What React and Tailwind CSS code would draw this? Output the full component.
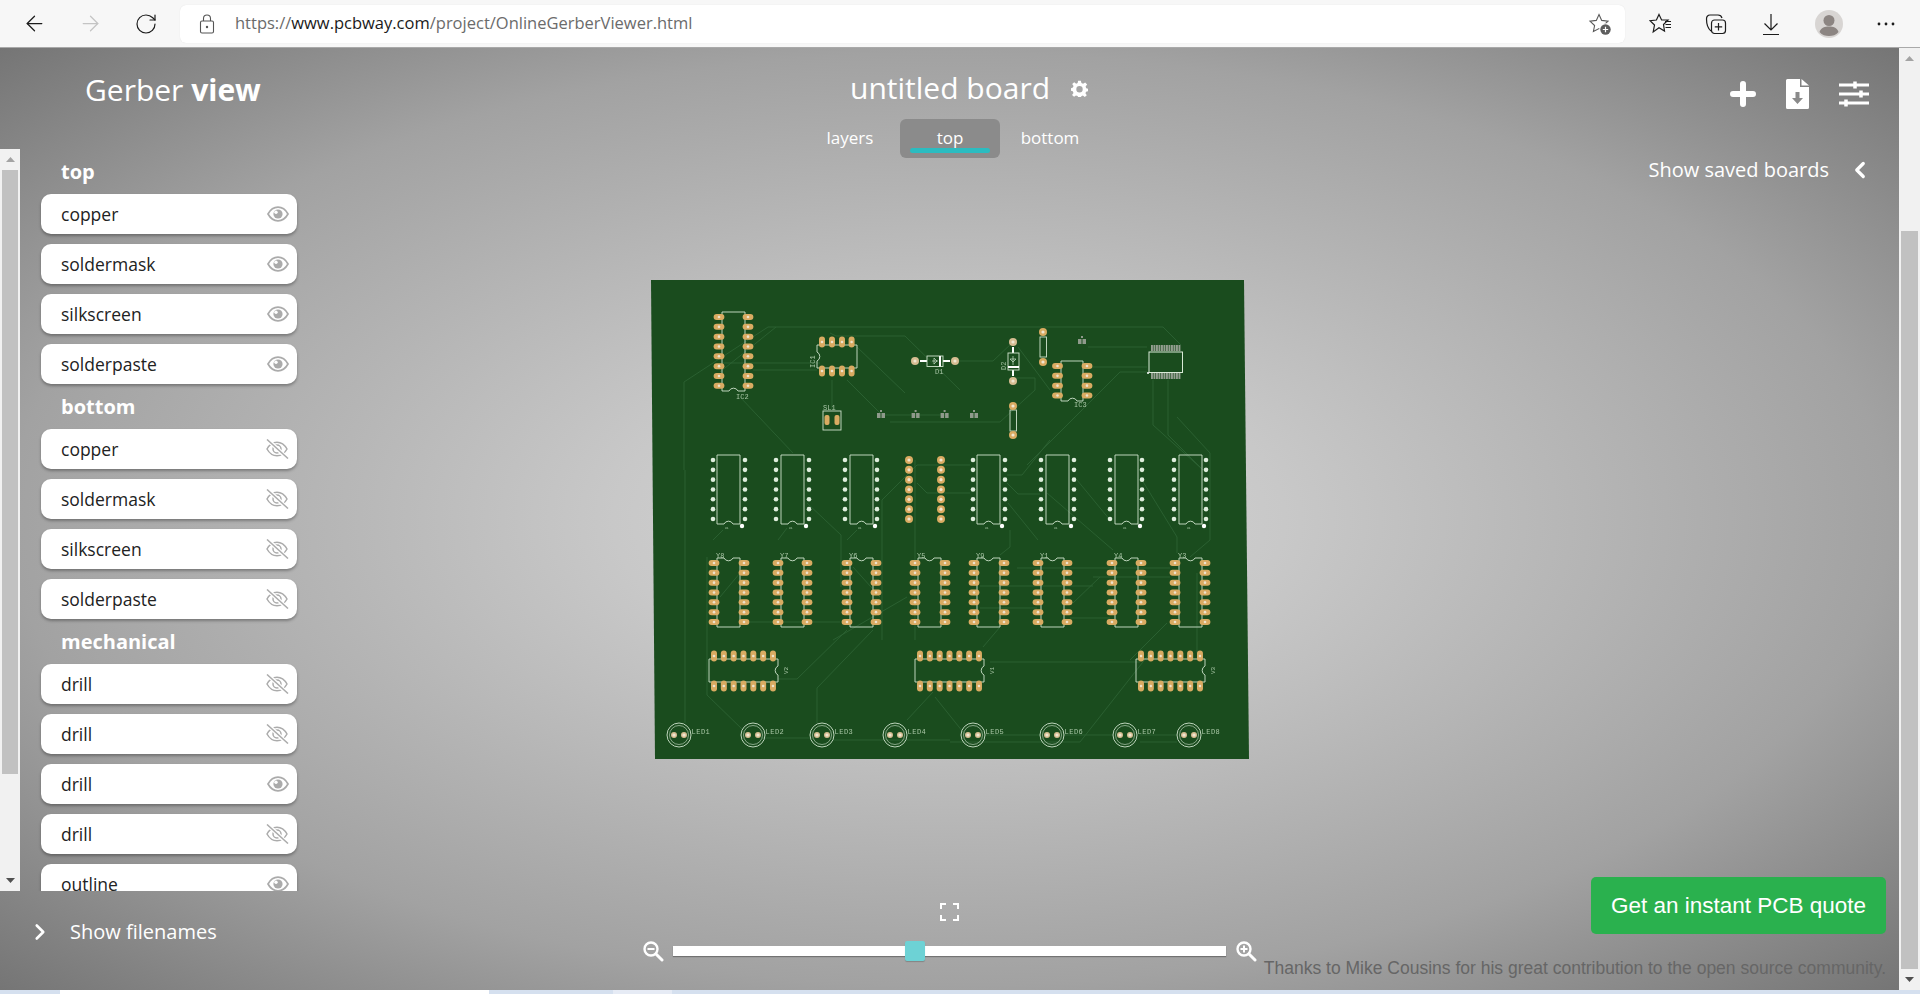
import { ArrowLeft, ArrowRight, RotateCw, ChevronLeft, ChevronRight } from 'lucide-react';

const layerGroups = [
    {
        title: 'top',
        rows: [['copper', true], ['soldermask', true], ['silkscreen', true], ['solderpaste', true]]
    },
    {
        title: 'bottom',
        rows: [['copper', false], ['soldermask', false], ['silkscreen', false], ['solderpaste', false]]
    },
    {
        title: 'mechanical',
        rows: [['drill', false], ['drill', false], ['drill', true], ['drill', false], ['outline', true]]
    }
];

const traces = [
    'M684 470V382L768 327H1163L1181 345',
    'M776 327L720 372',
    'M830 333L836 336H905L960 390',
    'M857 347L905 393',
    'M723 363H820',
    'M753 370H817',
    'M832 380V410',
    'M847 380L880 413',
    'M883 415L947 415',
    'M890 422H1000L1035 390V378H1013',
    'M740 397L793 453',
    'M950 361H993L1013 342',
    'M1018 347L1050 390',
    'M1088 347H1147',
    'M1083 367H1147',
    'M1147 372H1120L1027 465',
    'M1153 380V425L1203 470',
    'M1168 380V435L1203 470',
    'M1177 417L1210 453V540L1190 557',
    'M685 470V723',
    'M713 540L723 530',
    'M707 557V695L743 730',
    'M807 503L841 535V587',
    'M778 540L787 528',
    'M847 540L857 530',
    'M882 640V500L917 465H970',
    'M915 460V640',
    'M917 483L927 493H970',
    'M853 567L880 597',
    'M720 597L740 573',
    'M750 622H840',
    'M833 640L907 597',
    'M847 630L797 679H778',
    'M873 630L817 688V723',
    'M762 738H810',
    'M833 740H950',
    'M907 720L933 692',
    'M935 697L967 737',
    'M1007 475H1022L1050 440',
    'M1007 483L1018 494H1040',
    'M1010 530V547L1000 555',
    'M1038 540L1008 503',
    'M1047 493L1113 550',
    'M1077 480L1110 520',
    'M1142 480L1177 537V553',
    'M1017 568H1170',
    'M1093 577H1170',
    'M1073 603L1100 577',
    'M980 586H1093',
    'M980 608H1037',
    'M1070 618H1110',
    'M990 662H1140',
    'M1197 573V653',
    'M1150 653L1080 742H950',
    'M1167 623L1130 660',
    'M1000 627L983 647',
    'M985 735H1040',
    'M1063 735H1113',
    'M1140 735H1177',
    'M1140 742H1177'
];

const dipRowOne = [
    [717, 713, 745], [781, 776, 809], [850, 845, 877], [977, 973, 1005],
    [1046, 1041, 1074], [1115, 1110, 1142], [1179, 1174, 1206]
];
const dipRowTwo = [
    [717, 714, 744, 'Y8'], [781, 778, 807, 'Y7'], [850, 847, 876, 'Y6'], [918, 915, 945, 'Y5'],
    [977, 974, 1004, 'Y9'], [1041, 1038, 1067, 'Y1'], [1115, 1112, 1141, 'Y4'], [1179, 1175, 1205, 'Y3']
];
const leds = [679, 753, 822, 895, 973, 1052, 1125, 1189];
const steps = (start, count) => Array.from({ length: count }, (_, i) => start + i * 9.83);

function Pad({ x, y, vertical }) {
    return (
        <g>
            <rect
                x={vertical ? x - 3 : x - 5.4}
                y={vertical ? y - 5.4 : y - 3}
                width={vertical ? 6 : 10.8}
                height={vertical ? 10.8 : 6}
                rx="3"
                fill="#d9ab62"
            />
            <circle cx={x} cy={y} r="1.3" fill="#eee2cc" />
        </g>
    );
}

function RoundPad({ x, y, r = 4, fill = '#d9ab62' }) {
    return (
        <g>
            <circle cx={x} cy={y} r={r} fill={fill} />
            <circle cx={x} cy={y} r="1.6" fill="#f0e6d2" />
        </g>
    );
}

function PcbBoard() {
    const silk = { fill: 'none', stroke: '#cfe3cd', strokeWidth: 0.9 };
    const label = { fill: '#a9c6a6', fontFamily: 'Liberation Mono, monospace' };
    return (
        <svg viewBox="640 270 620 500" className="block w-[620px] h-[500px] blur-[0.35px]">
            <polygon points="651,280 1244,280 1249,759 655,759" fill="#1a4c1e" />
            <g fill="none" stroke="#2d6233" strokeWidth="0.9">
                {traces.map((d) => <path key={d} d={d} />)}
            </g>

            {/* IC2 */}
            <path d="M722 312H745V391H738A5 5 0 0 0 729 391H722Z" {...silk} />
            {[719, 748].map((x) => steps(317, 8).map((y) => <Pad key={`${x}-${y}`} x={x} y={y} />))}
            <text x="736" y="399" fontSize="7" {...label}>IC2</text>

            {/* IC1 */}
            <path d="M817 345H857V368H817V361A5 5 0 0 0 817 352Z" {...silk} />
            {[342, 371].map((y) => [822, 832, 842, 851.6].map((x) => <Pad key={`${x}-${y}`} x={x} y={y} vertical />))}
            <text x="815" y="368" fontSize="7" transform="rotate(-90 815 368)" {...label}>IC1</text>

            {/* D1 */}
            <path d="M920 361H927M943 361H950" stroke="#ffffff" strokeWidth="2" />
            <rect x="927" y="356" width="16" height="10.5" {...silk} />
            <path d="M940 356V366.5" stroke="#ffffff" strokeWidth="2" />
            <path d="M932 361H938M934 358V364L937 361Z" {...silk} strokeWidth="0.7" />
            <RoundPad x={915} y={361} fill="#d6bd92" />
            <RoundPad x={955} y={361} fill="#d6bd92" />
            <text x="935" y="374" fontSize="7" {...label}>D1</text>

            {/* SL1 */}
            <rect x="823" y="411" width="18" height="19" {...silk} />
            <rect x="824.5" y="415" width="5" height="10" rx="2" fill="#d9ab62" />
            <rect x="834.5" y="415" width="5" height="10" rx="2" fill="#d9ab62" />
            <text x="823" y="410" fontSize="7" {...label}>SL1</text>

            {/* small parts */}
            {[[881, 415], [915.6, 415], [944.6, 415], [974, 415], [1082, 341]].map(([x, y]) => (
                <g key={x} fill="#8f9a8c">
                    <rect x={x - 4} y={y - 2} width="3.5" height="5" />
                    <rect x={x + 0.5} y={y - 2} width="3.5" height="5" />
                    <rect x={x - 1} y={y - 5} width="2" height="2" />
                </g>
            ))}

            {/* D2 */}
            <path d="M1013 347V353M1013 370V376" stroke="#ffffff" strokeWidth="2" />
            <rect x="1008" y="353" width="11" height="17" {...silk} />
            <path d="M1008 367H1019" stroke="#ffffff" strokeWidth="2" />
            <path d="M1013 356V365M1010 359H1016L1013 362Z" {...silk} strokeWidth="0.7" />
            <RoundPad x={1013} y={342} fill="#d6bd92" />
            <RoundPad x={1013} y={381} fill="#d6bd92" />
            <text x="1006" y="370" fontSize="7" transform="rotate(-90 1006 370)" {...label}>D2</text>

            {/* resistors */}
            <rect x="1040" y="337" width="6.5" height="20" {...silk} />
            <RoundPad x={1043} y={332} />
            <RoundPad x={1043} y={362} />
            <rect x="1010" y="410" width="6.5" height="21" {...silk} />
            <RoundPad x={1013} y={406} />
            <RoundPad x={1013} y={435} />

            {/* IC3 */}
            <path d="M1061 361H1083V401H1077A5 5 0 0 0 1068 401H1061Z" {...silk} />
            {[1057.5, 1087].map((x) => steps(366, 4).map((y) => <Pad key={`${x}-${y}`} x={x} y={y} />))}
            <text x="1074" y="407" fontSize="7" {...label}>IC3</text>

            {/* SOIC */}
            <rect x="1149" y="352" width="33.5" height="20.5" fill="none" stroke="#d9ead7" strokeWidth="1" />
            {[345, 373].map((y) => Array.from({ length: 12 }, (_, i) => (
                <rect key={`${y}-${i}`} x={1151 + i * 2.5} y={y} width="1.9" height="6" fill="#949e90" />
            )))}
            <circle cx="1148" cy="373" r="1" fill="#ffffff" />

            {/* DIP row, no pads */}
            {dipRowOne.map(([x, left, right]) => (
                <g key={x}>
                    <path d={`M${x} 455H${x + 23}V524H${x + 16}A5 5 0 0 0 ${x + 7} 524H${x}Z`} {...silk} />
                    {[left, right].map((px) => steps(460, 7).map((y) => (
                        <circle key={`${px}-${y}`} cx={px} cy={y} r="2.3" fill="#dfeedd" />
                    )))}
                    <circle cx={x + 25} cy="526" r="2.2" fill="#ffffff" />
                    <text x={x + 8} y="529" fontSize="3" {...label}>U1</text>
                </g>
            ))}
            {[909, 941].map((x) => steps(460, 7).map((y) => <RoundPad key={`${x}-${y}`} x={x} y={y} />))}

            {/* DIP row with pads */}
            {dipRowTwo.map(([x, left, right, name]) => (
                <g key={x}>
                    <path d={`M${x} 558H${x + 7}A5 5 0 0 0 ${x + 16} 558H${x + 23}V627H${x}Z`} {...silk} />
                    {[left, right].map((px) => steps(563, 7).map((y) => <Pad key={`${px}-${y}`} x={px} y={y} />))}
                    <text x={x - 1} y="558" fontSize="7" {...label}>{name}</text>
                </g>
            ))}

            {/* horizontal packages */}
            {[[709, 714, 'V2'], [915, 920, 'V1'], [1136, 1141, 'V3']].map(([x, padX, name]) => (
                <g key={x}>
                    <path d={`M${x} 659H${x + 69}V666A5 5 0 0 0 ${x + 69} 675V682H${x}Z`} {...silk} />
                    {[656, 686].map((y) => steps(padX, 7).map((px) => <Pad key={`${px}-${y}`} x={px} y={y} vertical />))}
                    <text x={x + 72} y="673" fontSize="6" transform={`rotate(-90 ${x + 76} 670)`} {...label}>{name}</text>
                </g>
            ))}

            {/* LEDs */}
            {leds.map((x, i) => (
                <g key={x}>
                    <circle cx={x} cy="735" r="12" {...silk} />
                    <circle cx={x} cy="735" r="9.5" {...silk} strokeWidth="0.6" />
                    <RoundPad x={x - 5} y={735} r={3} fill="#d6bd92" />
                    <RoundPad x={x + 5} y={735} r={3} fill="#d6bd92" />
                    <text x={x + 12.5} y="733.5" fontSize="7" letterSpacing="0.5" {...label}>{`LED${i + 1}`}</text>
                </g>
            ))}
        </svg>
    );
}

function EyeIcon({ on }) {
    if (on) {
        return (
            <svg width="22" height="16" viewBox="0 0 22 16" className="shrink-0">
                <path d="M1 8C3.5 3.5 7 1.2 11 1.2S18.5 3.5 21 8C18.5 12.5 15 14.8 11 14.8S3.5 12.5 1 8Z" fill="none" stroke="#ababab" strokeWidth="1.7" />
                <circle cx="11" cy="8" r="4.6" fill="#ababab" />
                <circle cx="9" cy="6.3" r="1.7" fill="#ffffff" />
            </svg>
        );
    }
    return (
        <svg width="24" height="20" viewBox="0 0 24 20" className="shrink-0">
            <path d="M2 10C4.5 5.5 8 3.2 12 3.2S19.5 5.5 22 10C19.5 14.5 16 16.8 12 16.8S4.5 14.500 2 10Z" fill="none" stroke="#ababab" strokeWidth="1.5" />
            <circle cx="12" cy="10" r="4" fill="none" stroke="#ababab" strokeWidth="1.5" />
            <path d="M2.5 0.5L22.5 19.5" stroke="#ffffff" strokeWidth="4" />
            <path d="M2 0.5L23 19.5" stroke="#ababab" strokeWidth="1.5" />
        </svg>
    );
}

function ZoomIcon({ plus }) {
    return (
        <svg width="22" height="22" viewBox="0 0 22 22" className="shrink-0">
            <circle cx="9" cy="9" r="6.5" fill="none" stroke="#ffffff" strokeWidth="2.4" />
            <path d="M14 14L20 20" stroke="#ffffff" strokeWidth="3" strokeLinecap="round" />
            <path d={plus ? 'M5.5 9H12.5M9 5.5V12.5' : 'M5.5 9H12.5'} stroke="#ffffff" strokeWidth="2" />
        </svg>
    );
}

function ScrollBar({ className, thumbClassName }) {
    return (
        <div className={`flex flex-col bg-[#f1f1f1] ${className}`}>
            <div className="h-[21px] flex items-center justify-center text-[0px]">
                <svg width="9" height="5" viewBox="0 0 9 5"><path d="M0 5L4.5 0L9 5Z" fill="#a3a3a3" /></svg>
            </div>
            <div className="flex-1 flex flex-col">
                <div className={`mx-[2px] bg-[#c1c1c1] ${thumbClassName}`} />
            </div>
            <div className="h-[21px] flex items-center justify-center text-[0px]">
                <svg width="9" height="5" viewBox="0 0 9 5"><path d="M0 0L4.5 5L9 0Z" fill="#505050" /></svg>
            </div>
        </div>
    );
}

function BrowserBar() {
    return (
        <div className="h-[48px] shrink-0 flex items-center bg-[#f7f7f7] border-b border-[#a9a9a9] font-['Open_Sans',sans-serif]">
            <div className="w-[180px] shrink-0 flex items-center pl-[22px] gap-[31px]">
                <ArrowLeft size={25} strokeWidth={1.2} className="text-[#1c1c1c]" />
                <ArrowRight size={25} strokeWidth={1.2} className="text-[#c4c4c4]" />
                <RotateCw size={24} strokeWidth={1.2} className="text-[#1c1c1c]" />
            </div>
            <div className="w-[1445px] h-[38px] flex items-center bg-white rounded-md pl-[19px] pr-[13px] shadow-[0_0_1px_rgba(0,0,0,0.12)]">
                <svg width="16" height="20" viewBox="0 0 16 20" className="shrink-0">
                    <rect x="1.5" y="7" width="13" height="12" rx="1.5" fill="none" stroke="#555" strokeWidth="1.1" />
                    <path d="M4.5 7V4.5A3.5 3.5 0 0 1 11.5 4.5V7" fill="none" stroke="#555" strokeWidth="1.1" />
                    <circle cx="8" cy="13" r="1.2" fill="#555" />
                </svg>
                <span className="ml-[20px] text-[16.5px] text-[#6b6b6b] whitespace-nowrap">
                    https://<span className="text-[#1a1a1a]">www.pcbway.com</span>/project/OnlineGerberViewer.html
                </span>
                <svg width="24" height="24" viewBox="0 0 24 24" className="ml-auto shrink-0">
                    <path d="M11 2.5L13.7 8.400L20 9.200L15.400 13.500L16.600 19.500L11 16.500L5.400 19.500L6.600 13.500L2 9.200L8.300 8.400Z" fill="none" stroke="#5a5a5a" strokeWidth="1.1" />
                    <circle cx="17.500" cy="17.500" r="6.300" fill="#ffffff" />
                    <circle cx="17.500" cy="17.500" r="5.200" fill="#5e5e5e" />
                    <path d="M14.800 17.500H20.200M17.500 14.800V20.200" stroke="#ffffff" strokeWidth="1.2" />
                </svg>
            </div>
            <div className="flex-1 relative h-full flex items-center pl-[24px]">
                <svg width="24" height="24" viewBox="0 0 24 24" className="shrink-0">
                    <path d="M10 2.5L12.6 8H19L14.5 12.5L15.5 19L10 15.8L4.2 20L5.5 13L1 8.7L7.4 8Z" fill="none" stroke="#1c1c1c" strokeWidth="1.2" />
                    <path d="M16 9.5H22M16.5 12.5H22M16.5 15.5H22" stroke="#1c1c1c" strokeWidth="1.1" />
                </svg>
                <svg width="24" height="24" viewBox="0 0 24 24" className="shrink-0 ml-[31px]">
                    <path d="M7 19C4.5 17 2.5 12 2.5 7C2.5 4.5 4 3 6 3H14C16 3 17.5 4 18 6" fill="none" stroke="#1c1c1c" strokeWidth="1.2" />
                    <rect x="7.5" y="8" width="14" height="13.5" rx="3" fill="#f7f7f7" stroke="#1c1c1c" strokeWidth="1.2" />
                    <path d="M14.5 11V18.5M10.8 14.8H18.2" stroke="#1c1c1c" strokeWidth="1.2" />
                </svg>
                <svg width="24" height="24" viewBox="0 0 24 24" className="shrink-0 ml-[31px]">
                    <path d="M12 2V18M5.5 11.5L12 18L18.5 11.5M4 22.5H20" fill="none" stroke="#1c1c1c" strokeWidth="1.2" />
                </svg>
                <svg width="28" height="28" viewBox="0 0 28 28" className="shrink-0 ml-[32px]">
                    <circle cx="14" cy="14" r="14" fill="#d8d5d3" />
                    <circle cx="14" cy="10.5" r="5.5" fill="#8c8582" />
                    <path d="M4.5 22C6 17.5 10 16.5 14 16.5S22 17.5 23.5 22C21 25 17.5 26 14 26S7 25 4.5 22Z" fill="#8c8582" />
                </svg>
                <svg width="18" height="4" viewBox="0 0 18 4" className="shrink-0 ml-[34px]">
                    <circle cx="2" cy="2" r="1.4" fill="#1c1c1c" />
                    <circle cx="9" cy="2" r="1.4" fill="#1c1c1c" />
                    <circle cx="16" cy="2" r="1.4" fill="#1c1c1c" />
                </svg>
            </div>
        </div>
    );
}

export default function App() {
    return (
        <div className="h-[994px] w-[1920px] flex flex-col overflow-hidden bg-white font-['Open_Sans',sans-serif]">
            <BrowserBar />
            <div className="flex h-[942px]">
                <main className="w-[1899px] h-full grid grid-cols-[320px_1260px_319px] bg-[radial-gradient(ellipse_at_center,#d8d8d8_0%,#c8c8c8_25%,#a2a2a2_70%,#757575_100%)]">
                    {/* Left column */}
                    <div className="flex flex-col min-w-0">
                        <div className="h-[101px] pl-[85px] pt-[22px] text-[30px] leading-[40px] text-white">
                            Gerber <span className="font-bold">view</span>
                        </div>
                        <div className="h-[742px] flex overflow-hidden">
                            <ScrollBar className="w-[20px] shrink-0" thumbClassName="h-[604px] mr-[2px]" />
                            <div className="pl-[21px] pt-[10px] w-[277px]">
                                {layerGroups.map((group) => (
                                    <div key={group.title}>
                                        <h2 className="h-[35px] pl-[20px] text-[20px] leading-[26px] font-bold text-white">{group.title}</h2>
                                        {group.rows.map(([name, on], i) => (
                                            <div
                                                key={`${group.title}-${i}`}
                                                className="h-[40px] mb-[10px] w-[256px] flex items-center justify-between pl-[20px] pr-[8px] bg-white rounded-[10px] shadow-[0_2px_3px_rgba(0,0,0,0.3)]"
                                            >
                                                <span className="text-[17.5px] leading-[38px] text-[#222] -mt-[1px]">{name}</span>
                                                <EyeIcon on={on} />
                                            </div>
                                        ))}
                                    </div>
                                ))}
                            </div>
                        </div>
                        <div className="flex-1 flex items-start pl-[27px] pt-[28px] text-white">
                            <ChevronRight size={26} strokeWidth={2.4} className="shrink-0" />
                            <span className="ml-[17px] text-[20px] leading-[26px]">Show filenames</span>
                        </div>
                    </div>

                    {/* Center column */}
                    <div className="flex flex-col items-center min-w-0">
                        <div className="relative pt-[19px] text-[30px] leading-[42px] text-white">
                            untitled board
                            <svg width="17" height="17" viewBox="0 0 24 24" className="absolute left-[221px] top-[32px]">
                                <path d="M10 1H14L14.7 4.4L17 5.4L20 3.5L22.8 6.3L20.6 9.2L21.5 11.5L24 12.2V15.8L21.3 16.5L20.4 18.7L22.3 21.5L19.5 24L16.7 22L14.6 22.9L14 24H10L9.3 22.6L7 21.8L4.3 23.8L1.5 21L3.5 18.3L2.5 16L0 15.3V11.5L2.7 10.7L3.6 8.5L1.7 5.8L4.5 3.2L7.3 5.2L9.4 4.3ZM12 8.5A4.5 4.5 0 1 0 12 17.5A4.5 4.5 0 1 0 12 8.5Z" fill="#ffffff" fillRule="evenodd" />
                            </svg>
                        </div>
                        <div className="mt-[10px] flex text-[17px] leading-[37px] text-white">
                            <div className="w-[100px] h-[39px] text-center">layers</div>
                            <div className="relative w-[100px] h-[39px] text-center bg-[#8b8b8b] rounded-md">
                                top
                                <span className="absolute left-[10px] right-[10px] bottom-[5px] h-[5px] rounded-sm bg-[#2bbcc0]" />
                            </div>
                            <div className="w-[100px] h-[39px] text-center">bottom</div>
                        </div>
                        <div className="mt-[112px] w-[620px] h-[500px]">
                            <PcbBoard />
                        </div>
                        <svg width="19" height="18" viewBox="0 0 19 18" className="mt-[133px] mr-[2px]">
                            <path d="M1 6V1H6M13 1H18V6M18 12V17H13M6 17H1V12" fill="none" stroke="#ffffff" strokeWidth="2" />
                        </svg>
                        <div className="mt-[20px] mr-[2px] h-[20px] flex items-center">
                            <ZoomIcon />
                            <div className="relative ml-[9px] w-[553px] h-[10px] bg-white shadow-[0_1px_1px_rgba(0,0,0,0.3)]">
                                <div className="absolute left-[232px] -top-[5px] w-[20px] h-[20px] rounded-[2px] bg-[#6dd2d5] shadow-[0_1px_1px_rgba(0,0,0,0.2)]" />
                            </div>
                            <div className="ml-[9px]"><ZoomIcon plus /></div>
                        </div>
                    </div>

                    {/* Right column */}
                    <div className="flex flex-col items-end min-w-0 pr-[13px] text-white">
                        <div className="flex items-center h-[30px] mt-[31px] mr-[17px] gap-[30px]">
                            <svg width="26" height="26" viewBox="0 0 26 26">
                                <path d="M13 3V23M3 13H23" stroke="#ffffff" strokeWidth="6" strokeLinecap="round" />
                            </svg>
                            <svg width="23" height="30" viewBox="0 0 23 30">
                                <path d="M0 1.5A1.5 1.5 0 0 1 1.5 0H14V8H23V28.5A1.5 1.5 0 0 1 21.500 30H1.500A1.500 1.500 0 0 1 0 28.500Z" fill="#ffffff" />
                                <path d="M15.5 0L23 6.500H15.500Z" fill="#ffffff" />
                                <path d="M9.500 13H13.500V19H17L11.500 25L6 19H9.500Z" fill="#8a8a8a" />
                            </svg>
                            <svg width="30" height="26" viewBox="0 0 30 26">
                                <path d="M0 4H30M0 13H30M0 22H30" stroke="#ffffff" strokeWidth="3" />
                                <path d="M16 0.500V7.500M22 9.500V16.500M7 18.500V25.500" stroke="#ffffff" strokeWidth="3.500" />
                            </svg>
                        </div>
                        <div className="flex items-center mt-[47px] mr-[13px] text-[20px] leading-[28px]">
                            Show saved boards
                            <ChevronLeft size={26} strokeWidth={3} className="ml-[18px]" />
                        </div>
                        <button className="mt-auto w-[295px] h-[57px] rounded-[5px] bg-[#2ab14e] text-white text-[22.5px] font-['Liberation_Sans',sans-serif]">
                            Get an instant PCB quote
                        </button>
                        <div className="mt-[23px] mb-[11px] whitespace-nowrap text-[17.5px] leading-[22px] text-[#666666] font-['Liberation_Sans',sans-serif]">
                            Thanks to Mike Cousins for his great contribution to the open source community.
                        </div>
                    </div>
                </main>
                <ScrollBar className="w-[21px] shrink-0" thumbClassName="mt-[162px] flex-1" />
            </div>
            <div className="h-[4px] flex bg-[#d5e0ef]">
                <div className="w-[60px]" />
                <div className="w-[429px] bg-white" />
                <div className="w-[124px]" />
                <div className="w-[59px] bg-[#e6ebf5]" />
            </div>
        </div>
    );
}
